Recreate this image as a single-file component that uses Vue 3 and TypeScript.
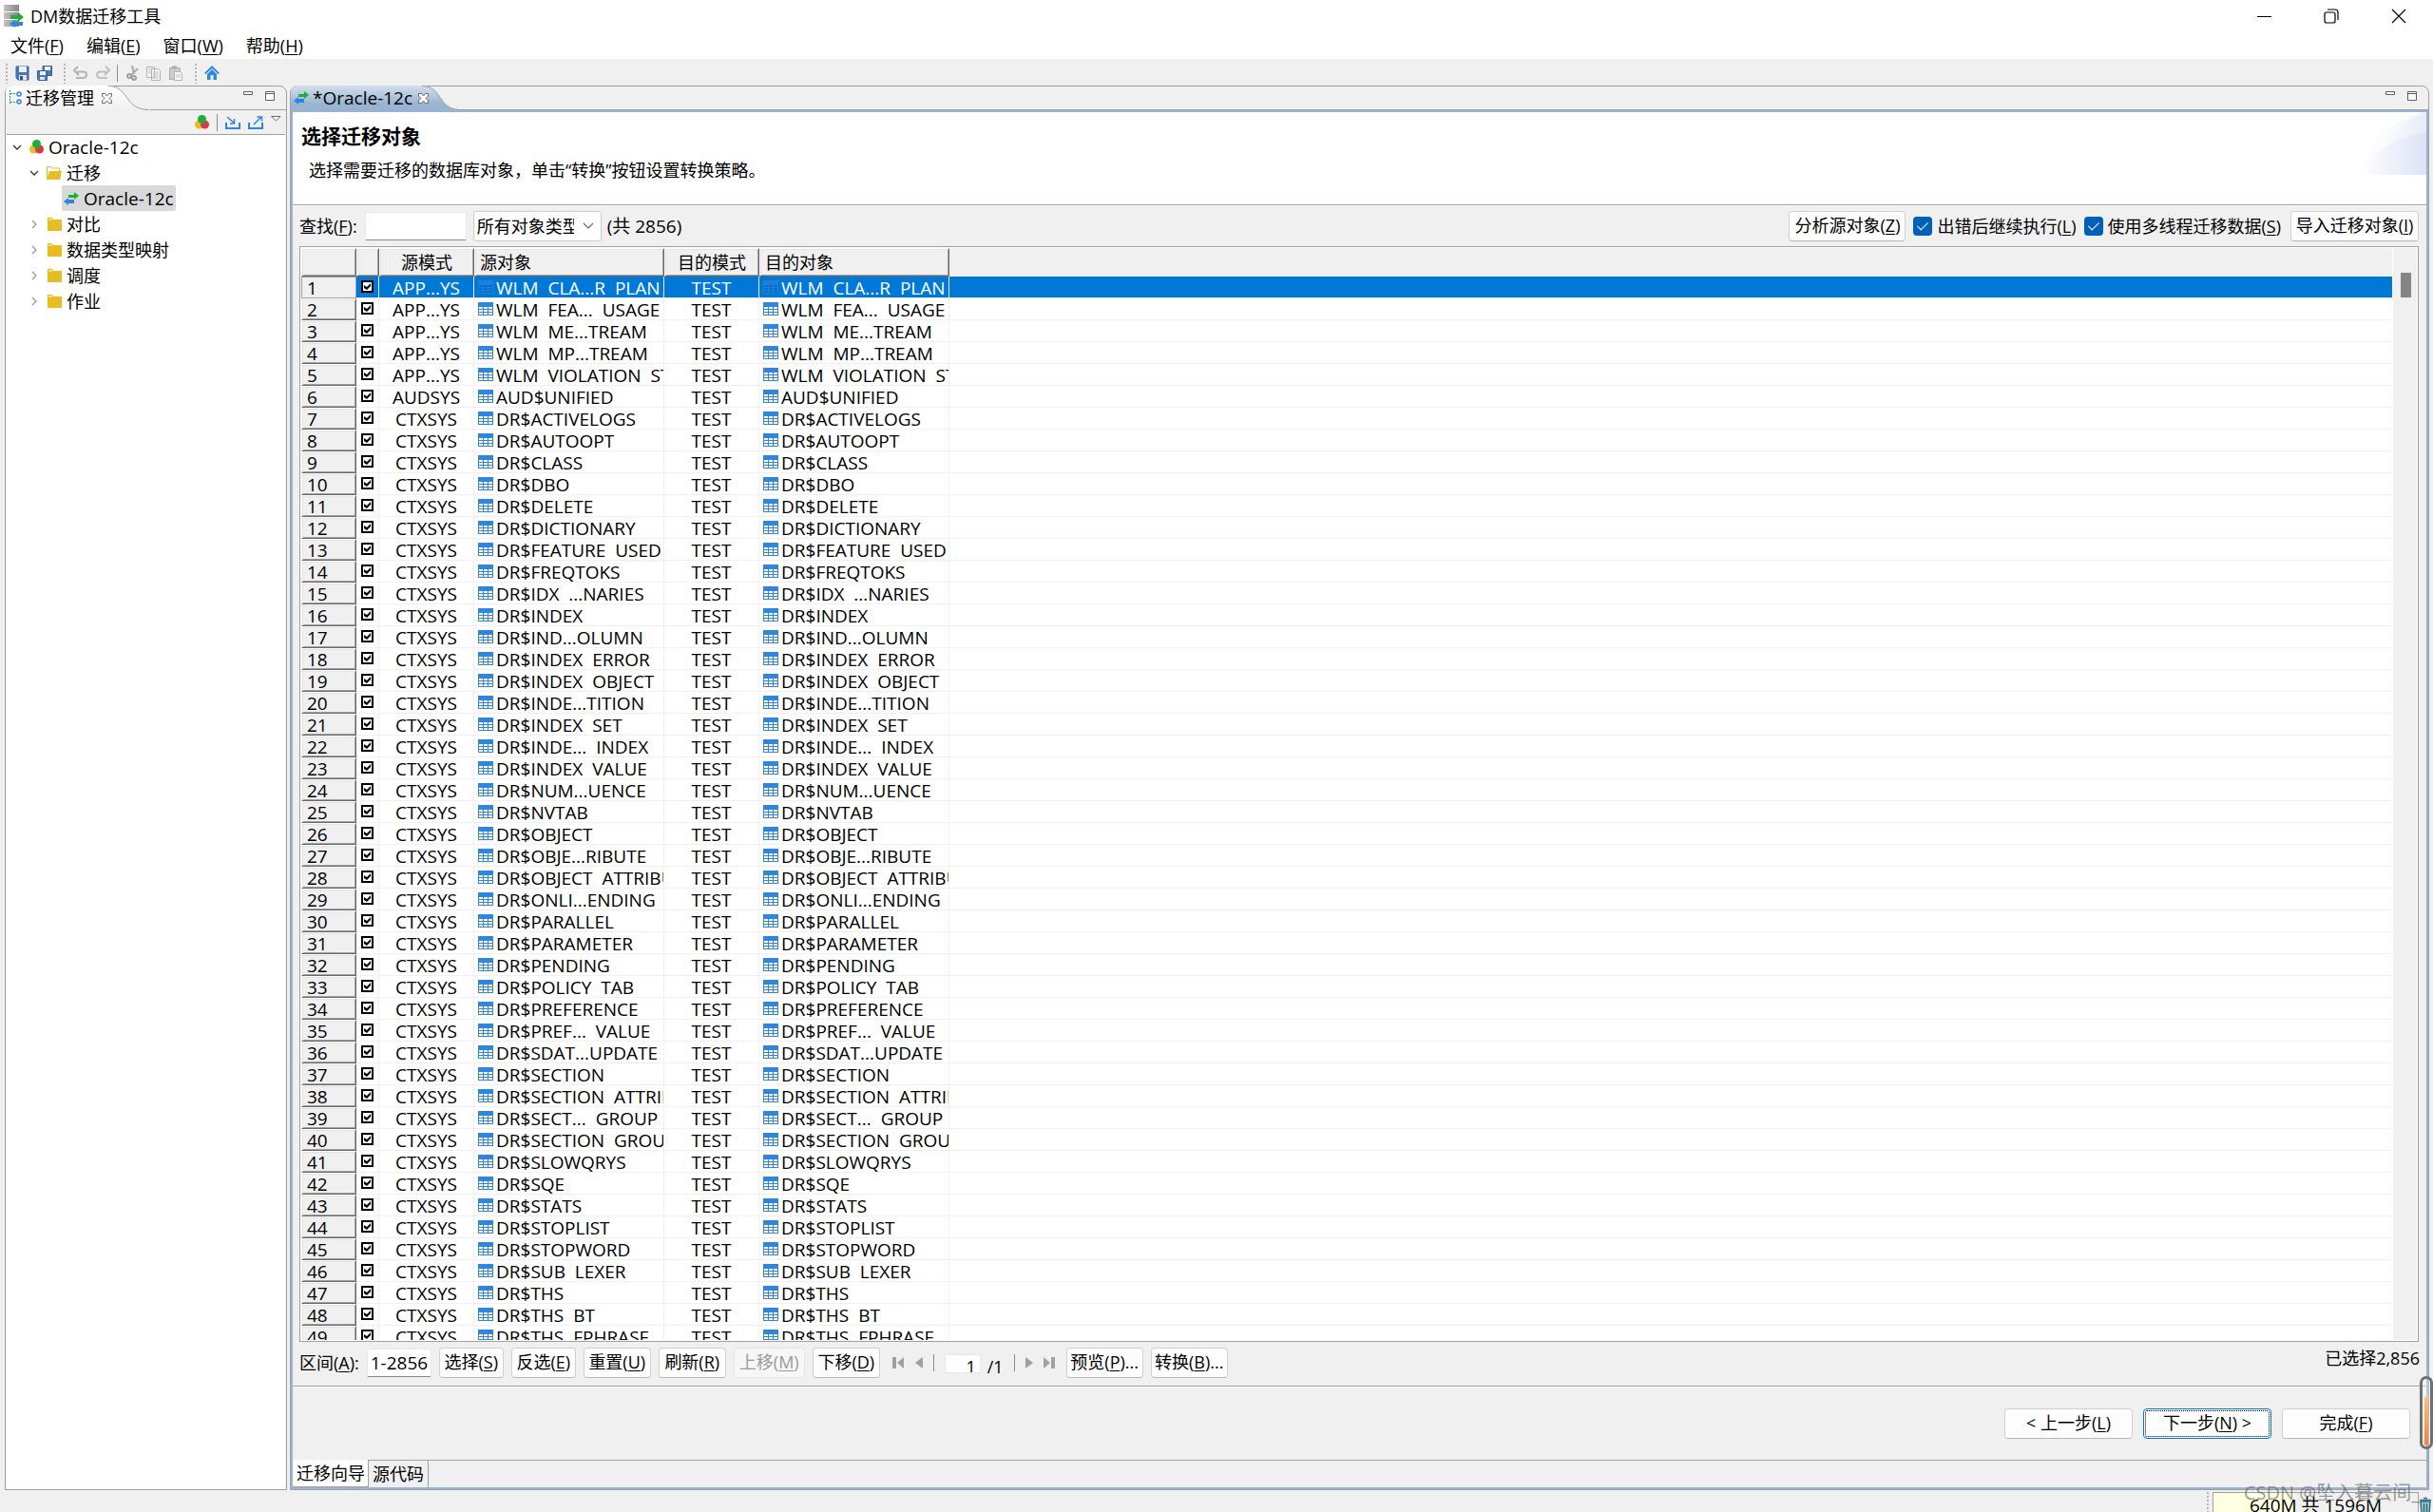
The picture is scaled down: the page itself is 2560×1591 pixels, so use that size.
<script setup lang="ts">
import { ref } from 'vue'

interface Row {
  schema: string
  name: string
  checked: boolean
}

const names: string[] = [
  'WLM  CLA...R  PLAN', 'WLM  FEA...  USAGE', 'WLM  ME...TREAM', 'WLM  MP...TREAM',
  'WLM  VIOLATION  ST', 'AUD$UNIFIED', 'DR$ACTIVELOGS', 'DR$AUTOOPT', 'DR$CLASS', 'DR$DBO',
  'DR$DELETE', 'DR$DICTIONARY', 'DR$FEATURE  USED', 'DR$FREQTOKS', 'DR$IDX  ...NARIES',
  'DR$INDEX', 'DR$IND...OLUMN', 'DR$INDEX  ERROR', 'DR$INDEX  OBJECT', 'DR$INDE...TITION',
  'DR$INDEX  SET', 'DR$INDE...  INDEX', 'DR$INDEX  VALUE', 'DR$NUM...UENCE', 'DR$NVTAB',
  'DR$OBJECT', 'DR$OBJE...RIBUTE', 'DR$OBJECT  ATTRIBU', 'DR$ONLI...ENDING', 'DR$PARALLEL',
  'DR$PARAMETER', 'DR$PENDING', 'DR$POLICY  TAB', 'DR$PREFERENCE', 'DR$PREF...  VALUE',
  'DR$SDAT...UPDATE', 'DR$SECTION', 'DR$SECTION  ATTRII', 'DR$SECT...  GROUP',
  'DR$SECTION  GROU', 'DR$SLOWQRYS', 'DR$SQE', 'DR$STATS', 'DR$STOPLIST', 'DR$STOPWORD',
  'DR$SUB  LEXER', 'DR$THS', 'DR$THS  BT', 'DR$THS  FPHRASE',
]

const rows = ref<Row[]>(
  names.map((name, i) => ({
    name,
    schema: i < 5 ? 'APP...YS' : i === 5 ? 'AUDSYS' : 'CTXSYS',
    checked: true,
  })),
)

const selected = ref(0)
const folders: string[] = ['对比', '数据类型映射', '调度', '作业']
const keyword = ref('')
const range = ref('1-2856')
const page = ref('1')
const continueOnError = ref(true)
const multiThread = ref(true)
</script>

<template>
  <div class="window">
    <svg class="defs" width="0" height="0" aria-hidden="true">
      <defs>
        <linearGradient id="tabBlue" x1="0" y1="0" x2="0" y2="1">
          <stop offset="0" stop-color="#d3dfec" />
          <stop offset="0.75" stop-color="#99b4d1" />
        </linearGradient>
        <linearGradient id="tabWhite" x1="0" y1="0" x2="0" y2="1">
          <stop offset="0" stop-color="#ffffff" />
          <stop offset="1" stop-color="#f0f0f0" />
        </linearGradient>
        <linearGradient id="dbGrey" x1="0" y1="0" x2="1" y2="0">
          <stop offset="0" stop-color="#c4c4c4" />
          <stop offset="1" stop-color="#858585" />
        </linearGradient>
        <linearGradient id="swoosh" x1="0" y1="0" x2="1" y2="0">
          <stop offset="0" stop-color="#ffffff" />
          <stop offset="1" stop-color="#dce3f6" />
        </linearGradient>
        <symbol id="arrows" viewBox="0 0 16 14">
          <path d="M5 3h6V0l5 4-5 4V6H5z" fill="#22ac38" />
          <path d="M11 8H5V6l-5 4 5 4v-2h6z" fill="#2e86de" />
        </symbol>
        <symbol id="balls" viewBox="0 0 15 15">
          <circle cx="4.500" cy="10" r="4.500" fill="#e8bd22" />
          <circle cx="10.500" cy="10" r="4.500" fill="#d53a4b" />
          <circle cx="7.500" cy="4.500" r="4.500" fill="#22ac38" />
        </symbol>
        <symbol id="grid" viewBox="0 0 16 14">
          <path d="M0 0h16v14H0z" fill="#2e86de" />
          <path d="M1 5h4v2H1zM6 5h4v2H6zM11 5h4v2h-4zM1 8h4v2H1zM6 8h4v2H6zM11 8h4v2h-4zM1 11h4v2H1zM6 11h4v2H6zM11 11h4v2h-4z" fill="#fff" />
        </symbol>
        <symbol id="gridOn" viewBox="0 0 16 14">
          <path d="M0 0h16v14H0z" fill="#1f7fdb" />
          <path d="M1 5h4v2H1zM6 5h4v2H6zM11 5h4v2h-4zM1 8h4v2H1zM6 8h4v2H6zM11 8h4v2h-4zM1 11h4v2H1zM6 11h4v2H6zM11 11h4v2h-4z" fill="#0070cc" />
        </symbol>
        <symbol id="closeTab" viewBox="0 0 11 11">
          <path d="M1 .500h2.500l2 2.500 2-2.500H10.500V3L8 5.500l2.500 2.500v2.500H7.500l-2-2.500-2 2.500H.500V8L3 5.500.500 3V.500z" fill="#fff" stroke="#6b6b6b" />
        </symbol>
        <symbol id="minmax" viewBox="0 0 34 12">
          <path d="M.500 1.500h9v3h-9zM23.500 1.500h9v9h-9zM23.500 3.500h9" fill="#fff" stroke="#5f5f5f" />
        </symbol>
      </defs>
    </svg>

    <header class="titlebar">
      <svg class="logo" width="22" height="24" viewBox="0 0 22 24">
        <path d="M0 0h16v7H0zM0 8h16v7H0zM0 16h16v7H0z" fill="url(#dbGrey)" />
        <path d="M7 11h8V8l6 5-6 5v-3H7z" fill="#22ac38" />
        <path d="M20 18h-8v-2l-6 4 6 4v-2h8z" fill="#2e86de" />
      </svg>
      <span class="apptitle">DM数据迁移工具</span>
      <div class="controls">
        <button type="button" aria-label="最小化"><svg width="16" height="16" viewBox="0 0 16 16"><path d="M0 8.500h15" stroke="#000" fill="none" /></svg></button>
        <button type="button" aria-label="还原"><svg width="16" height="16" viewBox="0 0 16 16"><path d="M4 1h8q3 0 3 3v8M3 4h7q2 0 2 2v7q0 2-2 2H3q-2 0-2-2V6q0-2 2-2z" stroke="#000" stroke-width="1.200" fill="none" /></svg></button>
        <button type="button" aria-label="关闭"><svg width="16" height="16" viewBox="0 0 16 16"><path d="M1 1l14 14M15 1L1 15" stroke="#000" stroke-width="1.200" fill="none" /></svg></button>
      </div>
    </header>

    <nav class="menubar">
      <a href="#">文件(<u>F</u>)</a>
      <a href="#">编辑(<u>E</u>)</a>
      <a href="#">窗口(<u>W</u>)</a>
      <a href="#">帮助(<u>H</u>)</a>
    </nav>

    <div class="toolbar">
      <i class="grip"></i>
      <svg width="16" height="16" viewBox="0 0 16 16"><path d="M1 1h13v14H3l-2-2z" fill="#4f78b0" stroke="#3a5f94" /><path d="M4 1h8v6H4z" fill="#eaf1fa" /><path d="M4 10h8v5H4z" fill="#dfe6ee" /><path d="M5 11h3v4H5z" fill="#30507c" /></svg>
      <svg class="saveall" width="16" height="16" viewBox="0 0 16 16"><path d="M6 .500h9.500v10H6z" fill="#4f78b0" stroke="#3a5f94" /><path d="M8 1h6v4H8z" fill="#eaf1fa" /><path d="M.500 5.500h10v10h-9l-1-1z" fill="#4f78b0" stroke="#3a5f94" /><path d="M3 6h6v4H3z" fill="#eaf1fa" /><path d="M3 12h5v3H3z" fill="#dfe6ee" /></svg>
      <i class="grip"></i>
      <svg width="16" height="16" viewBox="0 0 16 16"><path d="M5 1L1 5l4 4V6.500h6q3 0 3 3T11 13H3" fill="none" stroke="#b4b4b4" stroke-width="2" /></svg>
      <svg width="16" height="16" viewBox="0 0 16 16"><path d="M11 1l4 4-4 4V6.500H5q-3 0-3 3T5 13h8" fill="none" stroke="#c0c0c0" stroke-width="2" /></svg>
      <i class="bar"></i>
      <svg width="16" height="16" viewBox="0 0 16 16"><path d="M8 0l2 9M14 3L7 10" stroke="#ababab" stroke-width="2" fill="none" /><circle cx="5" cy="11" r="2" fill="none" stroke="#a0a0a0" stroke-width="2" /><circle cx="10" cy="13" r="2" fill="none" stroke="#a0a0a0" stroke-width="2" /></svg>
      <svg width="16" height="16" viewBox="0 0 16 16"><path d="M.500 1.500h8v11h-8zM5.500 3.500h7l2 2v10h-9z" fill="#f6f6f6" stroke="#b3b3b3" /><path d="M7 7h6M7 9h6M7 11h6M7 13h6M2 4h3M2 6h3M2 8h3" stroke="#c4c4c4" /></svg>
      <svg width="16" height="16" viewBox="0 0 16 16"><path d="M1.500 2.500h11v12h-11z" fill="#d2cdc6" stroke="#b0aaa2" /><path d="M4 .500h5v3H4z" fill="#aaa" /><path d="M6.500 6.500h6l2 2v7h-8z" fill="#f6f6f6" stroke="#b3b3b3" /><path d="M8 10h5M8 12h5" stroke="#c4c4c4" /></svg>
      <i class="grip"></i>
      <svg width="16" height="16" viewBox="0 0 16 16"><path d="M8 0l8 8-1.500 1L8 3 1.500 9 0 8zM8 4l5 5v6H9.500v-5h-3v5H3V9z" fill="#2e86de" /></svg>
    </div>

    <main class="workbench">
      <aside class="panel">
        <div class="panelhead">
          <svg class="tabshape" width="152" height="26" viewBox="0 0 152 26"><path d="M0 26V8Q0 0 8 0H108C130 0 124 25 150 25.500H152V26z" fill="url(#tabWhite)" /><path d="M108 .500C130 .500 124 25 150 25.500" fill="none" stroke="#a0a0a0" /></svg>
          <div class="tab">
            <svg width="14" height="16" viewBox="0 0 14 16"><path d="M1.500 0v15M2 3.500h6M2 12.500h6" stroke="#2e86de" stroke-dasharray="2 1" fill="none" /><circle cx="11" cy="4" r="2" fill="none" stroke="#2e86de" stroke-width="1.500" /><circle cx="11" cy="12" r="2" fill="none" stroke="#2e86de" stroke-width="1.500" /></svg>
            <span>迁移管理</span>
            <svg width="11" height="11"><use href="#closeTab" /></svg>
          </div>
          <svg class="mm" width="34" height="12"><use href="#minmax" /></svg>
        </div>
        <div class="paneltools">
          <svg width="15" height="15"><use href="#balls" /></svg>
          <i class="bar"></i>
          <svg width="16" height="14" viewBox="0 0 16 14"><path d="M1 7v6h14V7" fill="none" stroke="#2e86de" stroke-width="2" /><path d="M2 1l7 6M9.500 3v5H5" fill="none" stroke="#2e86de" stroke-width="1.500" /></svg>
          <svg width="16" height="14" viewBox="0 0 16 14"><path d="M1 7v6h14V7" fill="none" stroke="#2e86de" stroke-width="2" /><path d="M6 9l8-8M9.500 1H14.500v4.500" fill="none" stroke="#2e86de" stroke-width="1.500" /></svg>
          <svg class="drop" width="11" height="6" viewBox="0 0 11 6"><path d="M.500.500h9.500L5.500 5z" fill="#fff" stroke="#6b6b6b" /></svg>
        </div>
        <div class="tree">
          <div class="node">
            <svg class="chev" width="10" height="6" viewBox="0 0 10 6"><path d="M1 1l4 4 4-4" fill="none" stroke="#333" stroke-width="1.300" /></svg>
            <svg width="15" height="15"><use href="#balls" /></svg>
            <span class="latin">Oracle-12c</span>
          </div>
          <div class="node sub">
            <svg class="chev" width="10" height="6" viewBox="0 0 10 6"><path d="M1 1l4 4 4-4" fill="none" stroke="#333" stroke-width="1.300" /></svg>
            <svg width="16" height="14" viewBox="0 0 16 14"><path d="M.500 13V.500h4l1 1.500h8V5" fill="#fff" stroke="#e8bd22" /><path d="M3 5h13l-2 9H0z" fill="#e8bd22" /></svg>
            <span>迁移</span>
          </div>
          <div class="node leaf">
            <div class="picked">
              <svg width="16" height="14"><use href="#arrows" /></svg>
              <span class="latin">Oracle-12c</span>
            </div>
          </div>
          <div v-for="f in folders" :key="f" class="node sub">
            <svg class="chev" width="10" height="10" viewBox="0 0 10 10"><path d="M3 1l4 4-4 4" fill="none" stroke="#999" stroke-width="1.300" /></svg>
            <svg width="16" height="14" viewBox="0 0 16 14"><path d="M1 0h5l1 2h9v12H1z" fill="#e8bd22" /><path d="M2 2h4" stroke="#fff" /></svg>
            <span>{{ f }}</span>
          </div>
        </div>
      </aside>

      <section class="editor">
        <div class="panelhead">
          <svg class="tabshape" width="180" height="26" viewBox="0 0 180 26"><path d="M0 26V8Q0 0 8 0H138C160 0 154 25 178 25.500V26z" fill="url(#tabBlue)" /><path d="M138 .500C160 .500 154 25 178 25.500" fill="none" stroke="#a0a0a0" /></svg>
          <div class="tab">
            <svg width="16" height="14"><use href="#arrows" /></svg>
            <span class="latin">*Oracle-12c</span>
            <svg width="11" height="11"><use href="#closeTab" /></svg>
          </div>
          <svg class="mm" width="34" height="12"><use href="#minmax" /></svg>
        </div>

        <div class="body">
          <div class="banner">
            <div>
              <h1>选择迁移对象</h1>
              <p>选择需要迁移的数据库对象，单击“转换”按钮设置转换策略。</p>
            </div>
            <svg width="74" height="66" viewBox="0 0 74 66"><path d="M0 66Q20 10 74 0V66z" fill="url(#swoosh)" opacity=".35" /><path d="M18 66Q36 12 74 0V66z" fill="url(#swoosh)" opacity=".5" /><path d="M4 66Q30 26 74 22V66z" fill="url(#swoosh)" /></svg>
          </div>

          <div class="filters">
            <label for="find">查找(<u>F</u>):</label>
            <input id="find" v-model="keyword" class="field find" type="text" />
            <div class="combo">
              <select aria-label="对象类型"><option>所有对象类型</option></select>
              <svg width="12" height="7" viewBox="0 0 12 7"><path d="M1 1l5 5 5-5" fill="none" stroke="#666" stroke-width="1.200" /></svg>
            </div>
            <span class="latin">(共 2856)</span>
            <button type="button" class="btn analyse">分析源对象(<u>Z</u>)</button>
            <label class="check"><input v-model="continueOnError" type="checkbox" />出错后继续执行(<u>L</u>)</label>
            <label class="check"><input v-model="multiThread" type="checkbox" />使用多线程迁移数据(<u>S</u>)</label>
            <button type="button" class="btn import">导入迁移对象(<u>I</u>)</button>
          </div>

          <div class="gridbox">
            <div class="gridview">
              <table>
                <colgroup>
                  <col class="c-num" /><col class="c-check" /><col class="c-schema" /><col class="c-object" /><col class="c-schema" /><col class="c-object" /><col />
                </colgroup>
                <thead>
                  <tr>
                    <th></th><th></th><th>源模式</th><th class="left">源对象</th><th>目的模式</th><th class="left">目的对象</th><th class="rest"></th>
                  </tr>
                </thead>
                <tbody>
                  <tr v-for="(r, i) in rows" :key="i" :class="{ on: i === selected }" @click="selected = i">
                    <td class="num">{{ i + 1 }}</td>
                    <td class="tick"><input v-model="r.checked" type="checkbox" :aria-label="r.name" /></td>
                    <td class="mid">{{ r.schema }}</td>
                    <td><div class="obj"><svg width="16" height="14"><use :href="i === selected ? '#gridOn' : '#grid'" /></svg><span>{{ r.name }}</span></div></td>
                    <td class="mid">TEST</td>
                    <td><div class="obj"><svg width="16" height="14"><use :href="i === selected ? '#gridOn' : '#grid'" /></svg><span>{{ r.name }}</span></div></td>
                    <td class="rest"></td>
                  </tr>
                </tbody>
              </table>
            </div>
            <div class="scroll"><div class="thumb"></div></div>
          </div>

          <div class="actions">
            <label for="range">区间(<u>A</u>):</label>
            <input id="range" v-model="range" class="field range" type="text" />
            <button type="button" class="btn w68">选择(<u>S</u>)</button>
            <button type="button" class="btn w68">反选(<u>E</u>)</button>
            <button type="button" class="btn w71">重置(<u>U</u>)</button>
            <button type="button" class="btn w71">刷新(<u>R</u>)</button>
            <button type="button" class="btn w75" disabled>上移(<u>M</u>)</button>
            <button type="button" class="btn w71">下移(<u>D</u>)</button>
            <div class="pager">
              <svg width="13" height="13" viewBox="0 0 13 13"><path d="M0 0h4v12H0zM12 0v12L5 6z" fill="#a0a0a0" /></svg>
              <svg width="8" height="13" viewBox="0 0 8 13"><path d="M8 0v12L0 6z" fill="#a0a0a0" /></svg>
              <i class="bar"></i>
              <input v-model="page" class="page" type="text" aria-label="页码" />
              <span class="pages">/1</span>
              <i class="bar"></i>
              <svg width="8" height="13" viewBox="0 0 8 13"><path d="M0 0v12l8-6z" fill="#a0a0a0" /></svg>
              <svg width="13" height="13" viewBox="0 0 13 13"><path d="M0 0v12l7-6zM8 0h4v12H8z" fill="#a0a0a0" /></svg>
            </div>
            <button type="button" class="btn w81">预览(<u>P</u>)...</button>
            <button type="button" class="btn w81">转换(<u>B</u>)...</button>
            <span class="count">已选择2,856</span>
          </div>

          <div class="wizard">
            <button type="button" class="btn">&lt; 上一步(<u>L</u>)</button>
            <button type="button" class="btn next">下一步(<u>N</u>) &gt;</button>
            <button type="button" class="btn">完成(<u>F</u>)</button>
          </div>

          <div class="pagetabs">
            <button type="button" class="active">迁移向导</button>
            <button type="button">源代码</button>
          </div>
        </div>
      </section>
    </main>

    <footer class="status">
      <i class="grip"></i>
      <div class="heap"><span>640M 共 1596M</span></div>
      <svg width="14" height="18" viewBox="0 0 14 18"><path d="M2 5h10l-1 13H3z" fill="#a9cdb5" stroke="#2a6d93" stroke-width="1.500" /><path d="M1 3.500h12M5 1.500h4M5.500 7v9M8.500 7v9" stroke="#2a6d93" stroke-width="1.500" /></svg>
    </footer>

    <div class="watermark">CSDN @坠入暮云间_</div>
    <div class="gauge"><div></div></div>
  </div>
</template>

<style>
body {
  margin: 0;
  overflow: hidden;
}
</style>

<style scoped>
.window {
  position: relative;
  height: 100vh;
  display: flex;
  flex-direction: column;
  overflow: hidden;
  background: #f0f0f0;
  color: #000;
  font: 18px/24px 'Open Sans', 'Noto Sans CJK SC', sans-serif;
  white-space: nowrap;
}
.window * {
  box-sizing: border-box;
}
.defs {
  position: absolute;
}
svg {
  flex: none;
  display: block;
}
u {
  text-underline-offset: 2px;
  text-decoration-thickness: 1px;
}
button,
input,
select {
  font: inherit;
  color: inherit;
  margin: 0;
}
.latin {
  font-size: 19px;
}
.titlebar {
  flex: none;
  display: flex;
  align-items: center;
  height: 34px;
  padding-left: 4px;
  background: #fff;
}
.apptitle {
  margin-left: 6px;
}
.controls {
  display: flex;
  margin-left: auto;
}
.controls button {
  display: flex;
  justify-content: center;
  align-items: center;
  width: 70px;
  height: 34px;
  padding: 0;
  border: 0;
  background: none;
}
.controls button:last-child {
  width: 72px;
}
.menubar {
  flex: none;
  display: flex;
  gap: 24px;
  height: 28px;
  padding: 2px 0 0 11px;
  background: #fff;
}
.menubar a {
  color: inherit;
  text-decoration: none;
}
.toolbar {
  flex: none;
  display: flex;
  align-items: center;
  gap: 7px;
  height: 28px;
  padding: 2px 0 0 6px;
}
.grip {
  flex: none;
  width: 2px;
  height: 21px;
  margin-right: 1px;
  background: repeating-linear-gradient(#b4b4b4 0 2px, transparent 2px 4px);
}
.saveall ~ .grip {
  margin-left: 5px;
}
.bar {
  flex: none;
  width: 1px;
  height: 18px;
  background: #8c8c8c;
}
.workbench {
  flex: 1;
  min-height: 0;
  display: flex;
  gap: 3px;
  padding: 0 4px 0 5px;
}
.panel,
.editor {
  display: flex;
  flex-direction: column;
  border: 1px solid #a0a0a0;
  border-radius: 8px 8px 0 0;
}
.panel {
  flex: none;
  width: 297px;
}
.editor {
  flex: 1;
  min-width: 0;
}
.panelhead {
  position: relative;
  flex: none;
  display: flex;
  justify-content: space-between;
  height: 25px;
  border-bottom: 1px solid #a0a0a0;
}
.tabshape {
  position: absolute;
  left: 0;
  top: -1px;
}
.tab {
  position: relative;
  display: flex;
  align-items: center;
  gap: 4px;
  padding-left: 3px;
}
.panel .tab svg:last-child {
  margin-left: 4px;
}
.editor .tab svg:last-child {
  margin-left: 2px;
}
.mm {
  margin: 4px 11px 0 0;
}
.paneltools {
  flex: none;
  display: flex;
  justify-content: flex-end;
  align-items: center;
  gap: 8px;
  height: 26px;
  margin: 0 1px;
  padding-right: 4px;
  border-bottom: 1px solid #a0a0a0;
}
.drop {
  align-self: flex-start;
  margin-top: 6px;
}
.tree {
  flex: 1;
  margin: 0 1px;
  background: #fff;
}
.node {
  display: flex;
  align-items: center;
  gap: 5px;
  height: 27px;
  padding: 0 0 2px 6px;
}
.chev {
  margin-right: 3px;
}
.sub {
  padding-left: 24px;
}
.leaf {
  padding-left: 58px;
}
.picked {
  display: flex;
  align-items: center;
  gap: 5px;
  height: 27px;
  padding: 0 2px;
  border-radius: 2px;
  background: #d9d9d9;
}
.body {
  flex: 1;
  min-height: 0;
  display: flex;
  flex-direction: column;
  border: 2px solid #99b4d1;
}
.banner {
  flex: none;
  display: flex;
  justify-content: space-between;
  align-items: flex-start;
  height: 98px;
  border-bottom: 1px solid #a0a0a0;
  background: #fff;
}
.banner h1 {
  margin: 0;
  padding: 10px 0 0 9px;
  font: bold 21px/28px 'Noto Sans CJK SC', sans-serif;
}
.banner p {
  margin: 0;
  padding: 11px 0 0 17px;
}
.filters {
  flex: none;
  display: flex;
  align-items: center;
  height: 43px;
  padding: 0 8px 0 7px;
  border-top: 1px solid #fff;
}
.field {
  height: 30px;
  padding: 0 2px;
  border: 1px solid #e8e8e8;
  border-bottom-color: #868686;
  border-radius: 2px;
  background: #fff;
  outline: 0;
}
.find {
  width: 107px;
  margin-left: 8px;
}
.combo {
  position: relative;
  margin: 0 6px 0 7px;
}
.combo select {
  appearance: none;
  display: block;
  width: 135px;
  height: 32px;
  padding: 0 28px 0 3px;
  border: 1px solid #ccc;
  border-radius: 3px;
  background: #fdfdfd;
}
.combo svg {
  position: absolute;
  right: 8px;
  top: 12px;
  pointer-events: none;
}
.btn {
  flex: none;
  height: 32px;
  padding: 0 0 2px;
  border: 1px solid #d0d0d0;
  border-bottom-color: #b8b8b8;
  border-radius: 4px;
  background: #fdfdfd;
  text-align: center;
}
.btn:disabled {
  color: #9a9a9a;
  border-color: #e4e4e4;
  background: #f7f7f7;
}
.analyse {
  width: 123px;
  margin-left: auto;
}
.import {
  width: 135px;
  margin-left: 10px;
}
.check {
  display: flex;
  align-items: center;
}
.check input {
  appearance: none;
  width: 20px;
  height: 20px;
  margin: 0 5px 0 8px;
  border-radius: 4px;
  background: #005fb8;
  display: flex;
  justify-content: center;
}
.check input:checked::after {
  content: '';
  width: 5px;
  height: 10px;
  margin-top: 3px;
  border: solid #fff;
  border-width: 0 1px 1px 0;
  transform: rotate(45deg);
}
.gridbox {
  flex: 1;
  min-height: 0;
  display: flex;
  margin: 0 8px 0 7px;
  padding: 1px;
  border: 1px solid #a0a0a0;
  background: #fff;
}
.gridview {
  flex: 1;
  min-width: 0;
  overflow: hidden;
}
table {
  width: 100%;
  table-layout: fixed;
  border-collapse: separate;
  border-spacing: 0;
}
.c-num {
  width: 58px;
}
.c-check {
  width: 24px;
}
.c-schema {
  width: 100px;
}
.c-object {
  width: 200px;
}
th {
  height: 30px;
  padding: 0;
  border-style: solid;
  border-width: 1px;
  border-color: #fff #696969 #696969 #fff;
  background: #f0f0f0;
  box-shadow: inset 1px 1px #e3e3e3, inset -1px -1px #a0a0a0;
  font-weight: 400;
}
th.left {
  padding-left: 5px;
  text-align: left;
}
th.rest {
  border-color: #f0f0f0;
  box-shadow: none;
}
td {
  height: 23px;
  padding: 3px 0 0;
  border-right: 1px solid #f0f0f0;
  border-bottom: 1px solid #f0f0f0;
  font-size: 19px;
  line-height: 19px;
  vertical-align: top;
}
td.mid {
  text-align: center;
}
td.num {
  padding: 2px 0 0 5px;
  border: 1px solid;
  border-color: #fff #696969 #696969 #fff;
  background: #f0f0f0;
  box-shadow: inset 1px 1px #e3e3e3, inset -1px -1px #a0a0a0;
}
td.rest {
  border-right: 0;
}
td.tick {
  padding: 4px 0 0 5px;
}
.tick input {
  appearance: none;
  display: block;
  width: 13px;
  height: 13px;
  border: 2px solid #000;
  background: #fff;
}
.tick input:checked::after {
  content: '';
  display: block;
  width: 9px;
  height: 9px;
  background: #000;
  clip-path: polygon(1px 3px, 4px 5px, 8px 1px, 8px 4px, 4px 8px, 1px 6px);
}
.on td:not(.num) {
  background: #0078d7;
  color: #fff;
}
.on td.tick {
  color: #000;
}
.on td.num {
  border-color: #a0a0a0;
  box-shadow: none;
}
.obj {
  display: flex;
  gap: 3px;
  height: 19px;
  padding-left: 4px;
  overflow-x: clip;
  white-space: pre;
}
.obj svg {
  margin-top: 1px;
}
.scroll {
  flex: none;
  width: 26px;
  padding: 26px 0 0 8px;
  border-left: 1px solid #fff;
  background: #f0f0f0;
}
.thumb {
  width: 11px;
  height: 26px;
  background: #858585;
}
.actions {
  flex: none;
  display: flex;
  align-items: center;
  gap: 8px;
  height: 47px;
  padding: 0 7px 2px;
  border-bottom: 1px solid #a0a0a0;
}
.range {
  width: 68px;
  padding-left: 3px;
  font-size: 19px;
}
.w68 {
  width: 68px;
}
.w71 {
  width: 71px;
}
.w75 {
  width: 75px;
}
.w81 {
  width: 81px;
}
.pager {
  display: flex;
  align-items: center;
  gap: 11px;
  padding: 0 3px 0 5px;
}
.page {
  width: 38px;
  height: 20px;
  margin-top: 2px;
  padding: 6px 4px 0 0;
  border: 1px solid #e8e8e8;
  background: #fff;
  line-height: 20px;
  text-align: right;
  outline: 0;
}
.pages {
  height: 20px;
  margin-left: -4px;
  padding-top: 2px;
}
.count {
  margin: 0 0 10px auto;
}
.wizard {
  flex: none;
  display: flex;
  justify-content: flex-end;
  gap: 11px;
  height: 77px;
  padding: 22px 17px 0 0;
  border-top: 1px solid #fff;
}
.wizard .btn {
  width: 135px;
}
.wizard .next {
  border-color: #0078d4;
  outline: 1px dotted #000;
  outline-offset: -3px;
}
.pagetabs {
  flex: none;
  display: flex;
  height: 29px;
  border-top: 1px solid #a0a0a0;
}
.pagetabs button {
  padding: 0 4px;
  border: 0;
  border-right: 1px solid #a0a0a0;
  background: none;
  line-height: 24px;
}
.pagetabs .active {
  margin-top: -1px;
  padding-right: 3px;
  border-bottom: 1px solid #a0a0a0;
  background: #fff;
}
.status {
  flex: none;
  display: flex;
  justify-content: flex-end;
  height: 23px;
  padding: 2px 1px 0 0;
}
.status .grip {
  margin-right: 4px;
}
.heap {
  width: 217px;
  height: 30px;
  border: 1px solid #a0a0a0;
  background: linear-gradient(90deg, #ffffe1 40%, #f0f0f0 40%);
  text-align: center;
  font-size: 19px;
  line-height: 26px;
}
.status svg {
  margin-top: 5px;
}
.watermark {
  position: absolute;
  right: 14px;
  bottom: 6px;
  color: rgba(90, 90, 90, 0.6);
  font-size: 20px;
  line-height: 28px;
}
.gauge {
  position: absolute;
  right: 0;
  bottom: 66px;
  width: 14px;
  height: 77px;
  padding: 18px 2px 1px;
  border: 3px solid #707070;
  border-radius: 7px;
  background: rgba(255, 255, 255, 0.3);
}
.gauge div {
  height: 100%;
  border-radius: 2px;
  background: linear-gradient(#ffc080, #ff8030);
}
</style>
